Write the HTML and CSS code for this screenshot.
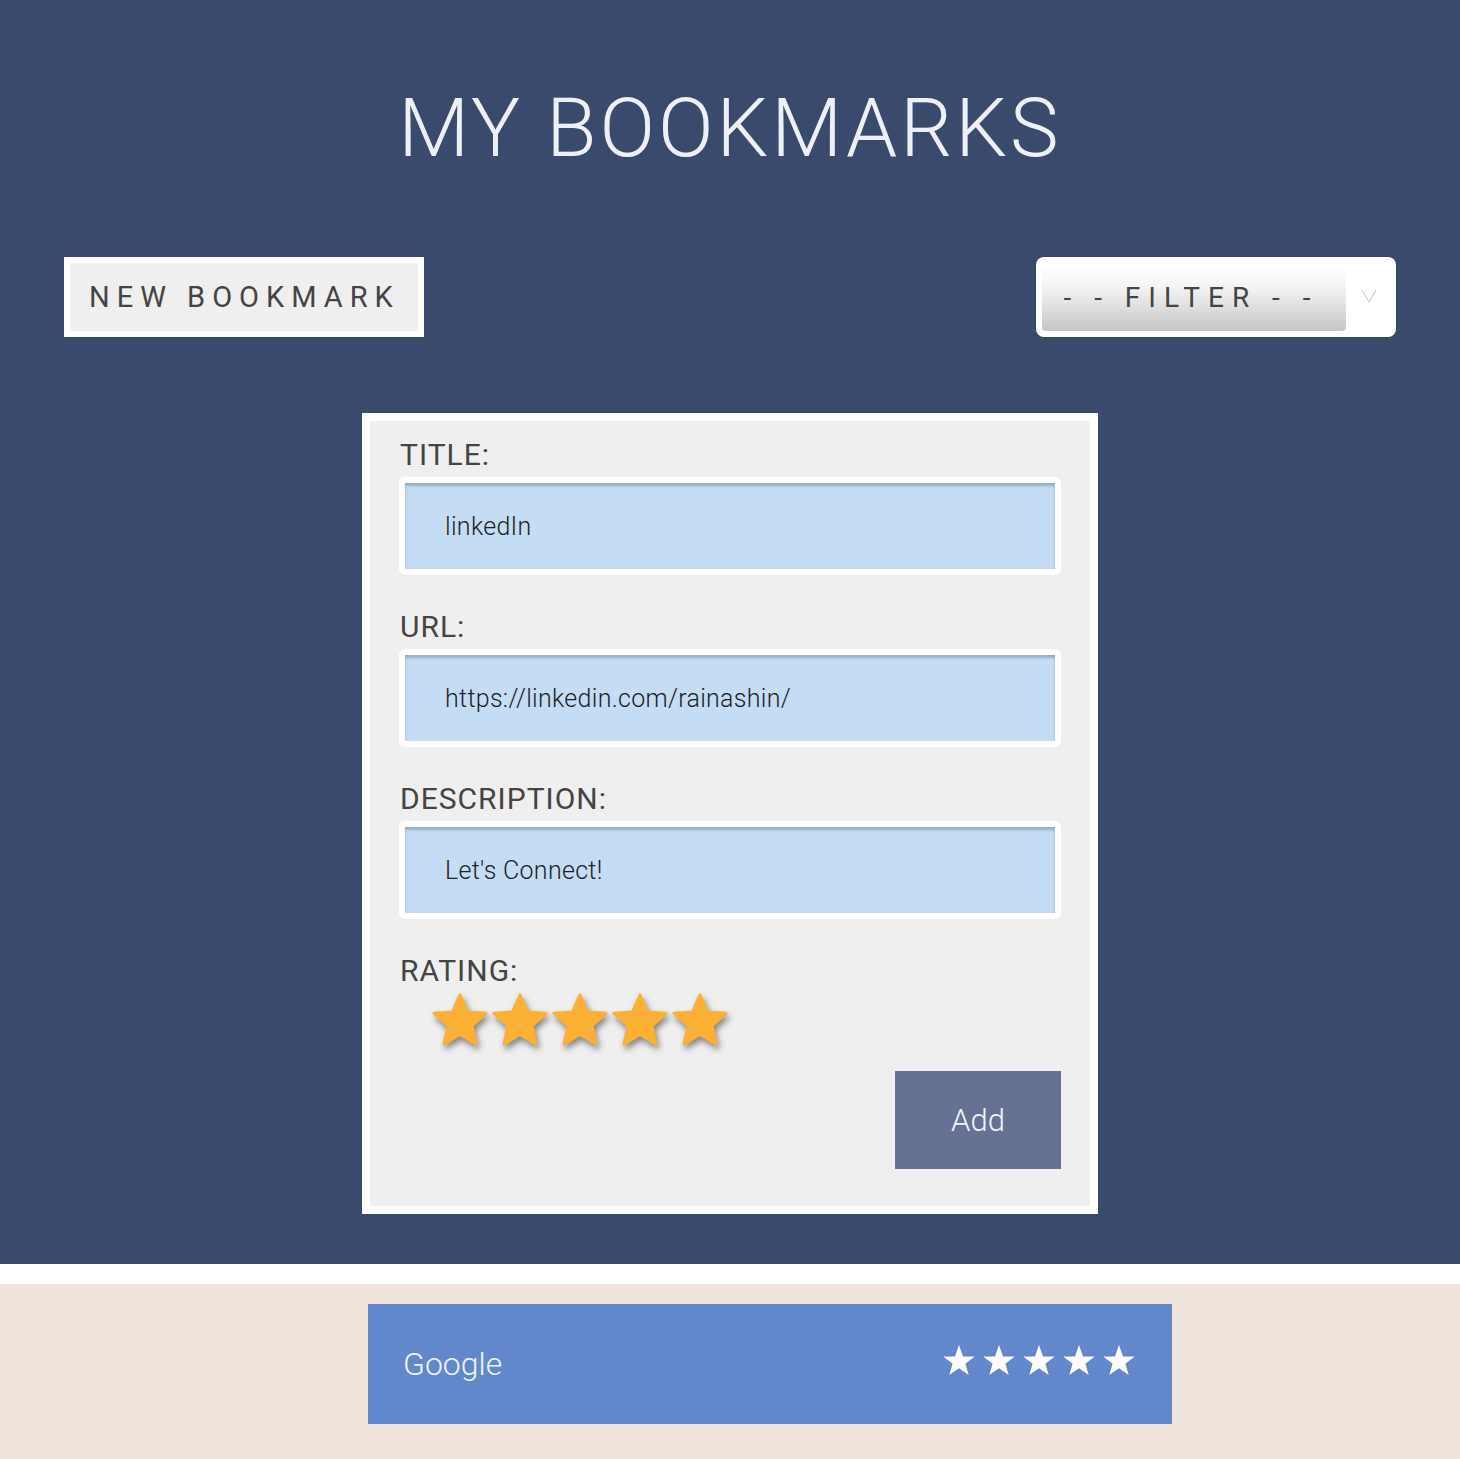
FILE: index.html
```html
<!DOCTYPE html>
<html lang="en">
<head>
<meta charset="utf-8">
<title>My Bookmarks</title>
<link rel="stylesheet" href="styles.css">
</head>
<body>
<header class="header">
  <h1 class="page-title">MY BOOKMARKS</h1>
  <div class="toolbar">
    <div class="new-btn">NEW BOOKMARK</div>
    <div class="filter">
      <div class="filter-box">- - FILTER - -</div>
      <svg class="chevron" width="16" height="14" viewBox="0 0 16 14"><polyline points="1,1 8,13 15,1" fill="none" stroke="#c4c4c4" stroke-width="1"/></svg>
    </div>
  </div>
  <form class="form-card">
    <div class="label">TITLE:</div>
    <div class="field">linkedIn</div>
    <div class="label">URL:</div>
    <div class="field">https://linkedin.com/rainashin/</div>
    <div class="label">DESCRIPTION:</div>
    <div class="field">Let's Connect!</div>
    <div class="label">RATING:</div>
    <div class="stars">
      <svg class="star" width="60" height="60" viewBox="0 0 60 60"><path d="M30 4 L37.35 20.89 L56 22.35 L41.89 34.86 L46 53 L30 43.5 L14 53 L18.11 34.86 L4 22.35 L22.65 20.89 Z"/></svg>
      <svg class="star" width="60" height="60" viewBox="0 0 60 60"><path d="M30 4 L37.35 20.89 L56 22.35 L41.89 34.86 L46 53 L30 43.5 L14 53 L18.11 34.86 L4 22.35 L22.65 20.89 Z"/></svg>
      <svg class="star" width="60" height="60" viewBox="0 0 60 60"><path d="M30 4 L37.35 20.89 L56 22.35 L41.89 34.86 L46 53 L30 43.5 L14 53 L18.11 34.86 L4 22.35 L22.65 20.89 Z"/></svg>
      <svg class="star" width="60" height="60" viewBox="0 0 60 60"><path d="M30 4 L37.35 20.89 L56 22.35 L41.89 34.86 L46 53 L30 43.5 L14 53 L18.11 34.86 L4 22.35 L22.65 20.89 Z"/></svg>
      <svg class="star" width="60" height="60" viewBox="0 0 60 60"><path d="M30 4 L37.35 20.89 L56 22.35 L41.89 34.86 L46 53 L30 43.5 L14 53 L18.11 34.86 L4 22.35 L22.65 20.89 Z"/></svg>
    </div>
    <div class="actions"><div class="add-btn">Add</div></div>
  </form>
</header>
<section class="list">
  <div class="bookmark">
    <span class="bm-title">Google</span>
    <div class="bm-stars">
      <svg width="32" height="32" viewBox="1.5 1 27 27"><path d="M15 1 L18.4 10.6 L28.3 10.7 L20.4 16.8 L23.2 26.4 L15 20.6 L6.8 26.4 L9.6 16.8 L1.7 10.7 L11.6 10.6 Z"/></svg>
      <svg width="32" height="32" viewBox="1.5 1 27 27"><path d="M15 1 L18.4 10.6 L28.3 10.7 L20.4 16.8 L23.2 26.4 L15 20.6 L6.8 26.4 L9.6 16.8 L1.7 10.7 L11.6 10.6 Z"/></svg>
      <svg width="32" height="32" viewBox="1.5 1 27 27"><path d="M15 1 L18.4 10.6 L28.3 10.7 L20.4 16.8 L23.2 26.4 L15 20.6 L6.8 26.4 L9.6 16.8 L1.7 10.7 L11.6 10.6 Z"/></svg>
      <svg width="32" height="32" viewBox="1.5 1 27 27"><path d="M15 1 L18.4 10.6 L28.3 10.7 L20.4 16.8 L23.2 26.4 L15 20.6 L6.8 26.4 L9.6 16.8 L1.7 10.7 L11.6 10.6 Z"/></svg>
      <svg width="32" height="32" viewBox="1.5 1 27 27"><path d="M15 1 L18.4 10.6 L28.3 10.7 L20.4 16.8 L23.2 26.4 L15 20.6 L6.8 26.4 L9.6 16.8 L1.7 10.7 L11.6 10.6 Z"/></svg>
    </div>
  </div>
</section>
</body>
</html>
```

FILE: styles.css
```css
html, body {
  margin: 0;
  padding: 0;
}
body {
  font-family: Roboto, "Liberation Sans", sans-serif;
  background: #ffffff;
  min-height: 1459px;
}
.header {
  background: #394a6d;
  padding: 88px 64px 50px;
}
.page-title {
  margin: 0;
  text-align: center;
  font-weight: 300;
  font-size: 82px;
  line-height: 80px;
  letter-spacing: 3px;
  color: #eef0f5;
}
.toolbar {
  display: flex;
  justify-content: space-between;
  margin-top: 89px;
  height: 80px;
}
.new-btn {
  box-sizing: border-box;
  width: 360px;
  height: 80px;
  border: 6px solid #ffffff;
  background: #efefef;
  display: flex;
  align-items: center;
  padding-left: 19px;
  font-size: 29px;
  letter-spacing: 7px;
  color: #444444;
}
.filter {
  box-sizing: border-box;
  width: 360px;
  height: 80px;
  background: #ffffff;
  border-radius: 8px;
  padding: 6px;
  display: flex;
  align-items: center;
}
.filter-box {
  box-sizing: border-box;
  width: 304px;
  height: 68px;
  border-radius: 4px;
  background: linear-gradient(#ffffff 0%, #f4f4f4 35%, #c6c6c6 100%);
  display: flex;
  align-items: center;
  justify-content: center;
  padding-right: 6px;
  font-size: 28px;
  letter-spacing: 8px;
  color: #444444;
}
.chevron {
  margin-left: 15px;
  margin-bottom: 2px;
}
.form-card {
  box-sizing: border-box;
  width: 736px;
  height: 801px;
  margin: 76px auto 0;
  border: 8px solid #ffffff;
  background: #efefef;
  padding: 17px 29px 37px;
}
.label {
  font-size: 30px;
  line-height: 34px;
  letter-spacing: 1px;
  color: #444444;
  margin-left: 1px;
}
.field {
  box-sizing: border-box;
  height: 98px;
  margin: 5px 0 35px;
  border: 6px solid #ffffff;
  border-radius: 6px;
  background: #c4ddf5;
  box-shadow: inset 0 3px 3px rgba(0, 0, 0, 0.22);
  display: flex;
  align-items: center;
  padding-left: 40px;
  font-size: 25px;
  letter-spacing: 0.3px;
  font-weight: 300;
  color: #1e1e24;
}
.stars {
  display: flex;
  margin-top: 3px;
  padding-left: 31px;
  height: 60px;
}
.star {
  display: block;
  fill: #fcb034;
  stroke: #fcb034;
  stroke-width: 3;
  stroke-linejoin: round;
  filter: drop-shadow(2px 4px 3px rgba(0, 0, 0, 0.45));
}
.actions {
  display: flex;
  justify-content: flex-end;
  margin-top: 20px;
}
.add-btn {
  width: 166px;
  height: 98px;
  background: #667194;
  display: flex;
  align-items: center;
  justify-content: center;
  font-size: 31px;
  font-weight: 300;
  color: #f2f3f8;
}
.list {
  margin-top: 20px;
  background: #efe3dc;
  padding: 20px 0 35px;
}
.bookmark {
  box-sizing: border-box;
  width: 804px;
  height: 120px;
  margin-left: 368px;
  background: #6287cb;
  display: flex;
  align-items: center;
  justify-content: space-between;
  padding: 0 37px 0 35px;
}
.bm-title {
  font-size: 32px;
  font-weight: 300;
  color: #f0f4fb;
}
.bm-stars {
  display: flex;
  gap: 8px;
  margin-top: -6px;
}
.bm-stars svg {
  display: block;
  fill: #ffffff;
}
```
